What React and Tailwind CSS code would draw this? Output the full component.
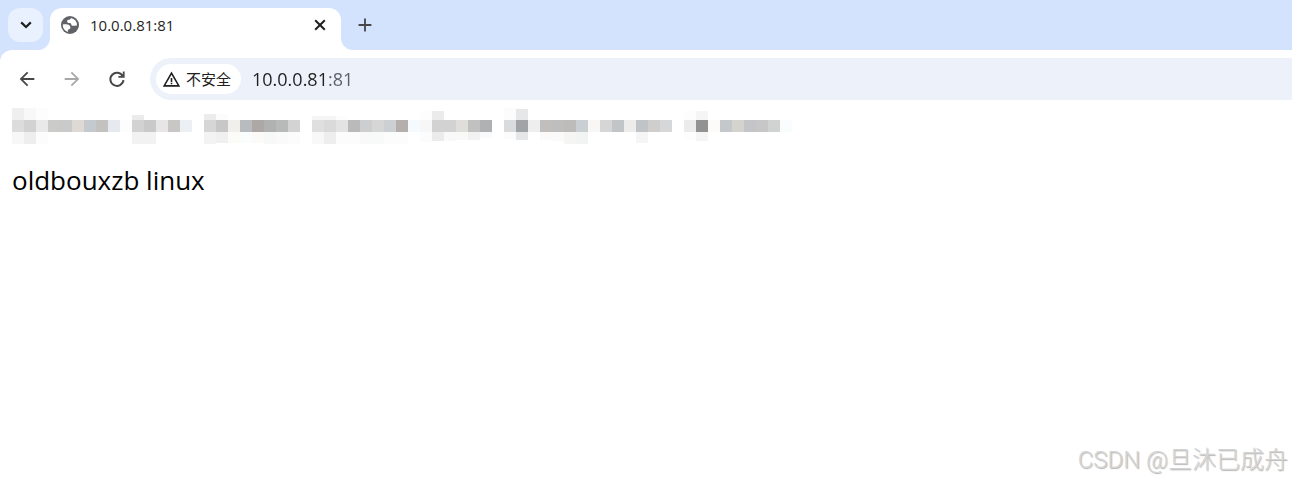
// src/App.jsx
import React, { useState } from 'react';
import { MdAdd, MdArrowBack, MdArrowForward, MdWarningAmber } from 'react-icons/md';

const CELL = 12;

// One colour per mosaic block, null = nothing there
const MOSAIC = [
  '#dcdcdc', '#d2d2d2', '#e9e9e9', '#cbcbc9', '#c9cbca', '#dfd9d5', '#c5cace', '#c3c2c0', '#e6eaf0', '#fdfdfd',
  '#d2d2d2', '#c9c9c9', '#e7e5e6', '#c8c7c5', '#ecf0f4', null,
  '#d6d6d6', '#c7c7c7', '#f0efec', '#b8bcbe', '#ada8a5', '#afb2b1', '#b7bab9', '#d3d3d3', null,
  '#dfdfdf', '#dadada', '#e3e3e3', '#bababa', '#cdced0', '#d6d6d6', '#cdd0d2', '#b4afac', '#f5faff', '#f7f7f7',
  '#d2d2d2', '#d2d2d2', '#dfdedb', '#c1c1c1', '#afb1b3', null,
  '#dadbdd', '#a0a4a7', '#eeeeee', '#c1bfbd', '#bebebe', '#bebcba', '#cacfd3', '#f9f7f5',
  '#d6d6d6', '#c2c5c8', '#eeecea', '#c0c4c7', '#cfcecc', '#d5d7d9', null,
  '#ebebeb', '#929292', '#fdfbf9', '#c5c8ca', '#d4d3ce', '#c3c5c8', '#c7c7c7', '#d1d2d2', '#fafdfd',
];

// Fainter blocks above and below the row: [column, y, height, colour]
const EDGES = [
  [0, 0, 12, '#efefef'], [1, 0, 12, '#f8f8f8'], [2, 0, 12, '#fdfdfd'],
  [10, 7, 5, '#ebebeb'], [16, 6, 6, '#ececec'], [17, 6, 6, '#fcfcfc'],
  [25, 8, 4, '#f5f5f5'], [26, 8, 4, '#f5f5f5'], [27, 8, 4, '#fdfdfd'],
  [34, 3, 9, '#fdfdfd'], [35, 3, 9, '#ebebeb'], [41, 0, 12, '#fcfcfc'], [42, 1, 11, '#e6e7e9'],
  [56, 3, 9, '#fdfdfd'], [57, 3, 9, '#f5f5f5'],
  [0, 24, 12, '#f7f7f7'], [1, 24, 12, '#eeeeee'], [2, 24, 12, '#fcfcfc'],
  [10, 24, 12, '#f2f2f2'], [11, 24, 12, '#f2f2f2'],
  [16, 24, 12, '#f3f3f3'], [17, 24, 11, '#f0f0f0'], [18, 24, 11, '#fbfbf8'], [19, 24, 11, '#fafdfb'],
  [20, 24, 11, '#fbfaf8'], [21, 24, 12, '#f7f9f9'], [22, 24, 12, '#fafafa'], [23, 24, 12, '#fcfcfc'],
  [25, 24, 12, '#f8f8f8'], [26, 24, 12, '#eeeeee'], [27, 24, 12, '#fcfcfc'], [28, 24, 12, '#fcfcfc'],
  [29, 24, 12, '#f9f9fa'], [30, 24, 12, '#f8fafa'], [31, 24, 12, '#fcfcfc'], [32, 24, 12, '#fcfcfc'],
  [34, 24, 10, '#fcfcfc'], [35, 24, 9, '#ebebeb'], [36, 24, 9, '#f9f9f9'], [37, 24, 8, '#f9f9f8'],
  [38, 24, 8, '#f2f2f2'], [39, 24, 6, '#fafafa'],
  [41, 24, 7, '#fcfcfc'], [42, 24, 8, '#e5e6e7'], [44, 24, 8, '#fbfaf9'], [45, 24, 9, '#f9faf9'],
  [46, 24, 12, '#f5f6f4'], [47, 24, 12, '#f2f4f3'],
  [52, 24, 11, '#f5f5f5'], [56, 24, 8, '#fdfdfd'], [57, 24, 9, '#f5f5f5'],
];

const Mosaic = () => (
  <svg width="780" height="36" className="block" shapeRendering="crispEdges" aria-hidden="true">
    {MOSAIC.map((fill, i) => fill && (
      <rect key={i} x={i * CELL} y={CELL} width={CELL} height={CELL} fill={fill} />
    ))}
    {EDGES.map(([col, y, h, fill]) => (
      <rect key={`${col}-${y}`} x={col * CELL} y={y} width={CELL} height={h} fill={fill} />
    ))}
  </svg>
);

const ChevronIcon = () => (
  <svg width="20" height="20" viewBox="0 0 20 20" fill="none" stroke="currentColor" strokeWidth="2.2" aria-hidden="true">
    <path d="M5.2 7.4 10 12l4.8-4.600" />
  </svg>
);

const CloseIcon = () => (
  <svg width="18" height="18" viewBox="0 0 18 18" fill="none" stroke="currentColor" strokeWidth="2" aria-hidden="true">
    <path d="m4.200 4.200 9.600 9.600M13.800 4.200l-9.600 9.600" />
  </svg>
);

const ReloadIcon = () => (
  <svg width="22" height="22" viewBox="0 0 22 22" aria-hidden="true">
    <path d="M16.8 8.200A6.600 6.600 0 1 0 17.500 12.200" fill="none" stroke="currentColor" strokeWidth="2" />
    <path d="M18.600 3.600v6.200h-6.200V8h2.600l1.800-1.800V3.600z" fill="currentColor" />
  </svg>
);

// Default favicon: dark disc with light land
const GlobeIcon = () => (
  <svg width="20" height="20" viewBox="0 0 20 20" aria-hidden="true">
    <circle cx="10" cy="10" r="9" fill="#5f6368" />
    <path
      d="M11 2.900c-.3 1.300-1.200 1.700-2.600 1.800-.9.100-1.300.7-1.200 1.700.1 1.200.9 1.500 2 1.500 1.500 0 2 .6 2.100 1.700.1 1 .8 1.300 1.800 1.200 1.600-.1 2.300-.4 3.900-.4A7.200 7.200 0 0 0 11 2.900z"
      fill="#fff"
    />
    <path
      d="M2.800 9.600c1.400-.3 3-.3 4.500-.1 1.900.3 3.100 1.400 3.100 3 0 1.100-.5 1.600-1.500 1.700-.8.100-1 .6-1 1.300v1.400A7.200 7.200 0 0 1 2.800 9.600z"
      fill="#fff"
    />
  </svg>
);

const TabStrip = () => (
  <div className="flex h-[50px] items-end">
    <button
      type="button"
      aria-label="Search tabs"
      className="ml-2 mb-2 flex h-[34px] w-[35px] items-center justify-center rounded-xl bg-[#e9f1fe] text-[#1f1f1f]"
    >
      <ChevronIcon />
    </button>

    {/* Active tab, with the flared corners at its foot */}
    <div className="relative ml-[7px] flex h-[42px] w-[291px] items-center rounded-t-xl bg-white pl-[10px] pr-3 pb-2">
      <svg className="absolute bottom-0 -left-3 size-3" viewBox="0 0 12 12" aria-hidden="true">
        <path d="M12 0v12H0A12 12 0 0 0 12 0z" fill="#fff" />
      </svg>
      <GlobeIcon />
      <span className="ml-[10px] flex-1 text-[15px] leading-5 text-[#1f1f1f]">10.0.0.81:81</span>
      <button type="button" aria-label="Close tab" className="text-[#1f1f1f]">
        <CloseIcon />
      </button>
      <svg className="absolute bottom-0 -right-3 size-3" viewBox="0 0 12 12" aria-hidden="true">
        <path d="M0 0v12h12A12 12 0 0 1 0 0z" fill="#fff" />
      </svg>
    </div>

    <button type="button" aria-label="New tab" className="mb-[14px] ml-[13px] text-[#474747]">
      <MdAdd className="size-[22px]" />
    </button>
  </div>
);

const Toolbar = () => {
  const [url, setUrl] = useState('10.0.0.81:81');

  return (
    <div className="flex items-center rounded-tl-xl bg-white pt-2 pb-1 pl-4">
      <div className="flex w-[134px] items-center gap-[23px] text-[#474747]">
        <button type="button" aria-label="Back">
          <MdArrowBack className="size-[22px]" />
        </button>
        <button type="button" aria-label="Forward" className="text-[#a8a8a8]">
          <MdArrowForward className="size-[22px]" />
        </button>
        <button type="button" aria-label="Reload">
          <ReloadIcon />
        </button>
      </div>

      <div className="flex h-[42px] flex-1 items-center rounded-l-full bg-[#ecf1fa] pl-[6px]">
        <button
          type="button"
          className="flex h-[30px] w-[85px] items-center gap-[5px] rounded-full bg-white pl-[6px] text-[15px] text-[#1f1f1f]"
        >
          <MdWarningAmber className="size-[19px] shrink-0" />
          <span className="whitespace-nowrap font-['Noto_Sans_CJK_SC',sans-serif] leading-5">不安全</span>
        </button>
        {/* Host dark, port lighter */}
        <input
          type="text"
          aria-label="Address"
          value={url}
          onChange={(e) => setUrl(e.target.value)}
          className="ml-[11px] min-w-0 flex-1 bg-[linear-gradient(90deg,#1f1f1f_75px,#5a5e63_75px)] bg-clip-text text-[18px] leading-6 text-transparent caret-black outline-none"
        />
      </div>
    </div>
  );
};

const App = () => {
  return (
    <div className="flex min-h-screen flex-col bg-[#d3e3fd] font-['Open_Sans','Noto_Sans_CJK_SC',sans-serif]">
      <TabStrip />
      <Toolbar />
      <main className="flex flex-1 flex-col bg-white pl-3 pt-1">
        <Mosaic />
        <p className="mt-5 text-[26px] leading-8 text-black">oldbouxzb linux</p>
        <p className="mt-auto pr-1 pb-1 text-right font-['Roboto','Noto_Sans_CJK_SC',sans-serif] text-[24px] font-light leading-9 text-[#d4d4d4] [text-shadow:1px_1px_1px_#b4b4b4]">
          CSDN @旦沐已成舟
        </p>
      </main>
    </div>
  );
};

export default App;
